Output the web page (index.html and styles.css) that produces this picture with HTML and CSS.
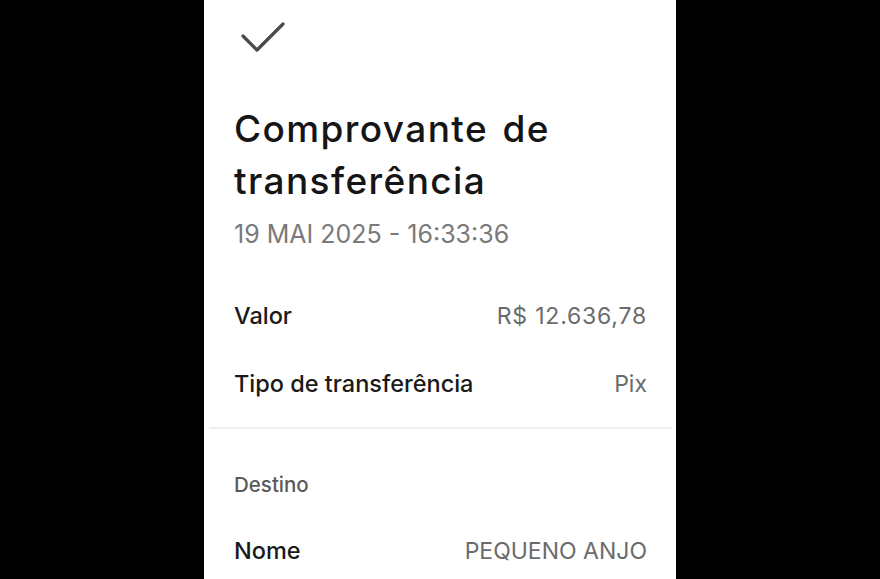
FILE: index.html
```html
<!DOCTYPE html>
<html lang="pt-BR">
<head>
    <meta charset="UTF-8">
    <meta name="viewport" content="width=device-width, initial-scale=1.0">
    <title>Comprovante de transferência</title>
    <link rel="stylesheet" href="styles.css">
</head>
<body>

    <main class="receipt">
        <div class="receipt-top">
            <svg class="check-icon" width="52" height="40" viewBox="0 0 52 40" aria-hidden="true">
                <path d="M9 18 L23 32 L49 6" fill="none" stroke="currentColor" stroke-width="3.2" stroke-linecap="round" stroke-linejoin="round"/>
            </svg>
        </div>

        <h1 class="receipt-title">Comprovante de transferência</h1>
        <p class="receipt-date">19 MAI 2025 - 16:33:36</p>

        <section class="receipt-section">
            <div class="row">
                <span class="row-label">Valor</span>
                <span class="row-value amount">R$ 12.636,78</span>
            </div>
            <div class="row">
                <span class="row-label">Tipo de transferência</span>
                <span class="row-value">Pix</span>
            </div>
        </section>

        <!-- Dados do recebedor -->
        <section class="receipt-section">
            <h2 class="section-title">Destino</h2>
            <div class="row">
                <span class="row-label">Nome</span>
                <span class="row-value">PEQUENO ANJO</span>
            </div>
        </section>
    </main>

</body>
</html>
```

FILE: styles.css
```css
body {
    font-family: Inter, 'Noto Sans', sans-serif;
    margin: 0;
    padding: 0;
    background-color: #000;
    color: #151515;
    display: flex;
    justify-content: center;
    height: 100vh;
    overflow: hidden;
}

.receipt {
    width: 472px;
    box-sizing: border-box;
    background-color: #fff;
    padding: 0 29px 0 30px;
}

.receipt-top {
    padding-top: 18px;
}

.check-icon {
    display: block;
    color: #4a4a4a;
}

.receipt-title {
    font-size: 37px;
    font-weight: 500;
    line-height: 52px;
    letter-spacing: 1.4px;
    word-spacing: 3px;
    margin: 45px 0 0;
    color: #151515;
}

.receipt-date {
    font-size: 25px;
    line-height: 32px;
    color: #7a7a7a;
    margin: 11px 0 0;
}

.receipt-section {
    padding: 32px 0 9px;
}

.receipt-section + .receipt-section {
    border-top: 2px solid #efefef;
    margin: 0 -25px 0 -25px;
    padding: 41px 25px 0 25px;
}

.row {
    display: flex;
    justify-content: space-between;
    line-height: 68px;
    height: 68px;
    font-size: 23.5px;
}

.row-label {
    font-weight: 500;
    color: #1a1a1a;
}

.row-value {
    font-size: 23px;
    color: #6b6b6b;
}

.row-value.amount {
    letter-spacing: 0.8px;
}

.section-title {
    font-size: 20.5px;
    font-weight: 500;
    line-height: 30px;
    color: #5a5a5a;
    margin: 0 0 17px;
}
```
